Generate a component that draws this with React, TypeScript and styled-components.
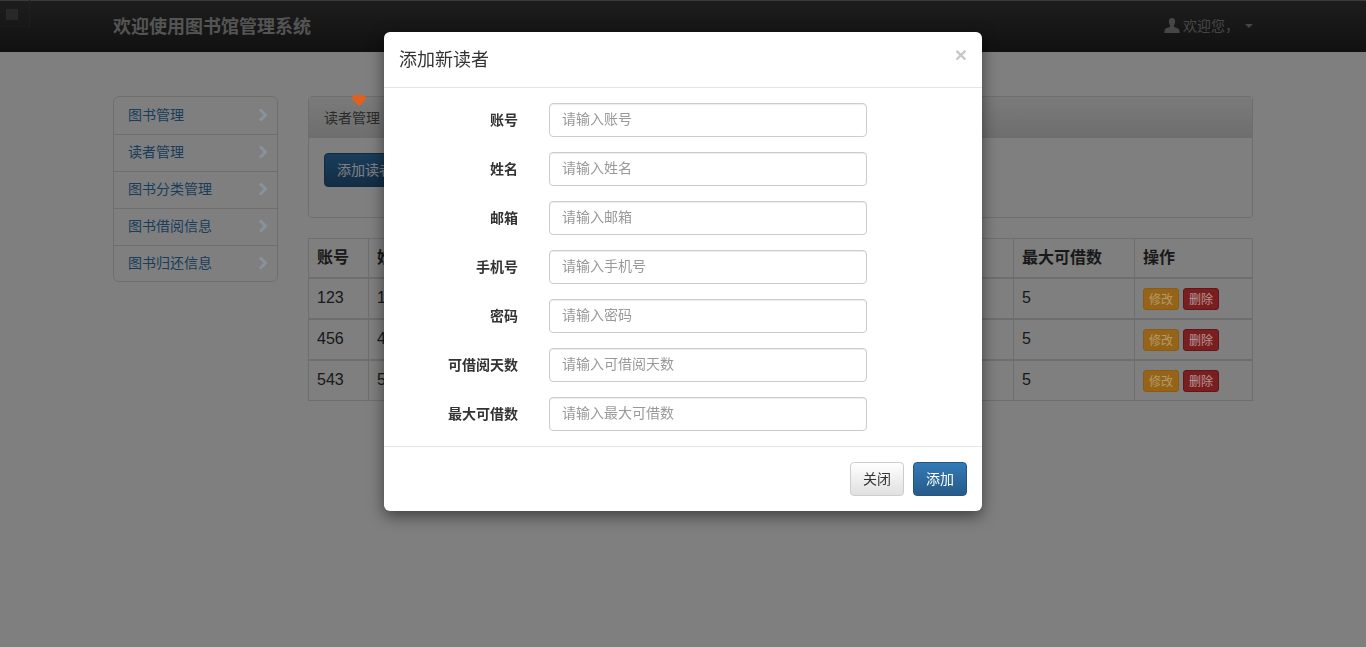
import React, { FC } from 'react';
import styled, { createGlobalStyle } from 'styled-components';

const GlobalStyle = createGlobalStyle`
    html, body {
        margin: 0;
        padding: 0;
        height: 100%;
        overflow: hidden;
        background: #fff;
    }
    body, input, button {
        font-family: "Liberation Sans", "Noto Sans CJK SC", sans-serif;
    }
    * {
        box-sizing: border-box;
    }
`;

const TopBar = styled.div`
    height: 52px;
    background: linear-gradient(to bottom, #3c3c3c 0%, #222 100%);
    box-shadow: inset 0 1px 0 rgba(255, 255, 255, 0.3);
`;

const TopSquare = styled.div`
    position: absolute;
    top: 0;
    left: 0;
    width: 30px;
    height: 27px;
    border-right: 1px solid #3f3f3f;
    border-bottom: 1px solid #363636;
    &::after {
        content: '';
        position: absolute;
        top: 9px;
        left: 6px;
        width: 12px;
        height: 11px;
        background: #505050;
    }
`;

const Container = styled.div`
    width: 1140px;
    margin: 0 auto;
`;

const TopInner = styled(Container)`
    height: 52px;
    padding-bottom: 2px;
    display: flex;
    align-items: center;
    justify-content: space-between;
`;

const Brand = styled.div`
    font-size: 18px;
    font-weight: bold;
    color: #a8a8a8;
`;

const UserMenu = styled.div`
    display: flex;
    align-items: center;
    font-size: 14px;
    color: #8c8c8c;
`;

const UserName = styled.span`
    margin-left: 3px;
    width: 62px;
`;

const Caret = styled.span`
    width: 0;
    height: 0;
    margin-top: 2px;
    border-top: 4px solid #8c8c8c;
    border-left: 4px solid transparent;
    border-right: 4px solid transparent;
`;

const Main = styled(Container)`
    display: flex;
    gap: 30px;
    padding-top: 44px;
`;

const SideMenu = styled.div`
    width: 165px;
    height: 186px;
    flex: none;
    border: 1px solid #ddd;
    border-radius: 6px;
`;

const SideItem = styled.div`
    height: 37px;
    padding: 0 9px 0 14px;
    display: flex;
    align-items: center;
    justify-content: space-between;
    font-size: 14px;
    color: #337ab7;
    & + & {
        border-top: 1px solid #ddd;
    }
`;

const SideLabel = styled.span`
    margin-top: -4px;
`;

const ChevronMark = styled.svg`
    position: relative;
    z-index: 2;
    margin-top: -2px;
`;

const Right = styled.div`
    flex: 1;
    min-width: 0;
`;

const Panel = styled.div`
    position: relative;
    height: 122px;
    margin-bottom: 20px;
    border: 1px solid #ddd;
    border-radius: 4px;
`;

const PanelHead = styled.div`
    height: 41px;
    padding: 0 15px 2px;
    display: flex;
    align-items: center;
    font-size: 14px;
    color: #555;
    background: linear-gradient(to bottom, #f5f5f5 0%, #dcdcdc 100%);
`;

const PanelBody = styled.div`
    padding: 15px;
`;

const Marker = styled.svg`
    position: absolute;
    top: -2px;
    left: 43px;
    z-index: 2;
`;

const BlueButton = styled.button`
    height: 34px;
    padding: 0 12px 2px;
    font-size: 14px;
    color: #fff;
    border: 1px solid #245580;
    border-radius: 4px;
    background: linear-gradient(to bottom, #337ab7 0%, #265a88 100%);
`;

const Table = styled.table`
    width: 944px;
    table-layout: fixed;
    border-collapse: collapse;
    color: #333;
`;

const HeadCell = styled.th<{ $w: number }>`
    width: ${p => p.$w}px;
    height: 39px;
    padding: 0 8px 4px;
    text-align: left;
    font-size: 16px;
    border: 1px solid #ddd;
    border-bottom: 2px solid #ddd;
`;

const Cell = styled.td`
    height: 41px;
    padding: 0 8px 1px;
    font-size: 16px;
    border: 1px solid #ddd;
    border-top: 2px solid #ddd;
    white-space: nowrap;
    overflow: hidden;
`;

const ActionCell = styled(Cell)`
    padding-top: 2px;
    padding-bottom: 0;
`;

const SmallButton = styled.button<{ $tone: 'warn' | 'danger' }>`
    position: relative;
    z-index: 2;
    width: 36px;
    height: 22px;
    padding: 0 0 1px;
    margin-right: 4px;
    vertical-align: middle;
    font-size: 12px;
    color: ${p => (p.$tone === 'warn' ? '#b39a6a' : '#b59a9a')};
    border-radius: 3px;
    border: 1px solid ${p => (p.$tone === 'warn' ? '#875c14' : '#651517')};
    background: ${p => (p.$tone === 'warn' ? '#966418' : '#7a1f20')};
`;

const Backdrop = styled.div`
    position: fixed;
    inset: 0;
    z-index: 1;
    background: rgba(0, 0, 0, 0.5);
`;

const Dialog = styled.div`
    position: fixed;
    top: 32px;
    left: 384px;
    z-index: 3;
    width: 598px;
    height: 479px;
    display: flex;
    flex-direction: column;
    background: #fff;
    border-radius: 6px;
    box-shadow: 0 5px 15px rgba(0, 0, 0, 0.5);
`;

const DialogHead = styled.div`
    height: 56px;
    flex: none;
    padding: 0 15px;
    display: flex;
    align-items: center;
    justify-content: space-between;
    border-bottom: 1px solid #e5e5e5;
`;

const DialogTitle = styled.div`
    margin-top: -4px;
    font-size: 18px;
    color: #333;
`;

const CloseX = styled.span`
    margin-top: -9px;
    font-size: 21px;
    font-weight: bold;
    color: #c8c8c8;
`;

const Form = styled.div`
    flex: 1;
    padding: 15px 0 0 15px;
    display: flex;
    flex-direction: column;
    gap: 15px;
`;

const FormRow = styled.div`
    display: grid;
    grid-template-columns: 119px 318px;
    column-gap: 31px;
    align-items: center;
`;

const Label = styled.label`
    padding-bottom: 2px;
    text-align: right;
    font-size: 14px;
    font-weight: bold;
    color: #333;
`;

const Input = styled.input`
    height: 34px;
    padding: 5px 12px 7px;
    font-size: 14px;
    border: 1px solid #ccc;
    border-radius: 4px;
    box-shadow: inset 0 1px 1px rgba(0, 0, 0, 0.075);
    &::placeholder {
        color: #999;
    }
`;

const DialogFoot = styled.div`
    height: 65px;
    flex: none;
    padding: 15px;
    display: flex;
    justify-content: flex-end;
    gap: 9px;
    border-top: 1px solid #e5e5e5;
`;

const GrayButton = styled.button`
    width: 54px;
    height: 34px;
    padding: 0 0 2px;
    font-size: 14px;
    color: #333;
    border: 1px solid #ccc;
    border-radius: 4px;
    background: linear-gradient(to bottom, #fff 0%, #e0e0e0 100%);
`;

const SaveButton = styled(BlueButton)`
    width: 54px;
    padding: 0 0 2px;
`;

const menus = ['图书管理', '读者管理', '图书分类管理', '图书借阅信息', '图书归还信息'];

const columns: [string, number][] = [
    ['账号', 60],
    ['姓名', 146],
    ['邮箱', 176],
    ['手机号', 110],
    ['密码', 84],
    ['可借阅天数', 129],
    ['最大可借数', 121],
    ['操作', 118],
];

const readers = [
    ['123', '123', '123@qq.com', '123', '123', '30', '5'],
    ['456', '456', '456@qq.com', '456', '456', '30', '5'],
    ['543', '543', '543@qq.com', '543', '543', '30', '5'],
];

const fields = ['账号', '姓名', '邮箱', '手机号', '密码', '可借阅天数', '最大可借数'];

const UserIcon: FC = () => (
    <svg width="16" height="15" viewBox="0 0 16 15">
        <path
            d="M8 0C5.800 0 4.700 1.600 4.800 3.800c.1 1.500.6 2.800 1.300 3.600.3.4.2 1-.2 1.300C4.400 9.600 1 10.200.6 12.200L.3 15h15.400l-.3-2.800c-.4-2-3.800-2.600-5.300-3.500-.4-.3-.5-.9-.2-1.300.7-.8 1.200-2.100 1.300-3.600C11.300 1.600 10.200 0 8 0z"
            fill="#8c8c8c"
        />
    </svg>
);

const Chevron: FC = () => (
    <ChevronMark width="10" height="14" viewBox="0 0 10 14">
        <path d="M2 1.500 7.500 7 2 12.500" fill="none" stroke="#88929e" strokeWidth="3" />
    </ChevronMark>
);

const App: FC = () => {
    return (
        <>
            <GlobalStyle />
            <TopBar>
                <TopSquare />
                <TopInner>
                    <Brand>欢迎使用图书馆管理系统</Brand>
                    <UserMenu>
                        <UserIcon />
                        <UserName>欢迎您，</UserName>
                        <Caret />
                    </UserMenu>
                </TopInner>
            </TopBar>
            <Main>
                <SideMenu>
                    {menus.map(m => (
                        <SideItem key={m}>
                            <SideLabel>{m}</SideLabel>
                            <Chevron />
                        </SideItem>
                    ))}
                </SideMenu>
                <Right>
                    <Panel>
                        <Marker width="14" height="11" viewBox="0 0 14 11">
                            <path d="M0 3C0 1 2 0 4 0h6c2 0 4 1 4 3 0 2-5 6-7 8-2-2-7-6-7-8z" fill="#e0601c" />
                        </Marker>
                        <PanelHead>读者管理</PanelHead>
                        <PanelBody>
                            <BlueButton>添加读者</BlueButton>
                        </PanelBody>
                    </Panel>
                    <Table>
                        <thead>
                            <tr>
                                {columns.map(([name, w]) => (
                                    <HeadCell key={name} $w={w}>
                                        {name}
                                    </HeadCell>
                                ))}
                            </tr>
                        </thead>
                        <tbody>
                            {readers.map(r => (
                                <tr key={r[0]}>
                                    {r.map((v, i) => (
                                        <Cell key={i}>{v}</Cell>
                                    ))}
                                    <ActionCell>
                                        <SmallButton $tone="warn">修改</SmallButton>
                                        <SmallButton $tone="danger">删除</SmallButton>
                                    </ActionCell>
                                </tr>
                            ))}
                        </tbody>
                    </Table>
                </Right>
            </Main>
            <Backdrop />
            <Dialog>
                <DialogHead>
                    <DialogTitle>添加新读者</DialogTitle>
                    <CloseX>×</CloseX>
                </DialogHead>
                <Form>
                    {fields.map(f => (
                        <FormRow key={f}>
                            <Label>{f}</Label>
                            <Input placeholder={'请输入' + f} />
                        </FormRow>
                    ))}
                </Form>
                <DialogFoot>
                    <GrayButton>关闭</GrayButton>
                    <SaveButton>添加</SaveButton>
                </DialogFoot>
            </Dialog>
        </>
    );
};

export default App;
